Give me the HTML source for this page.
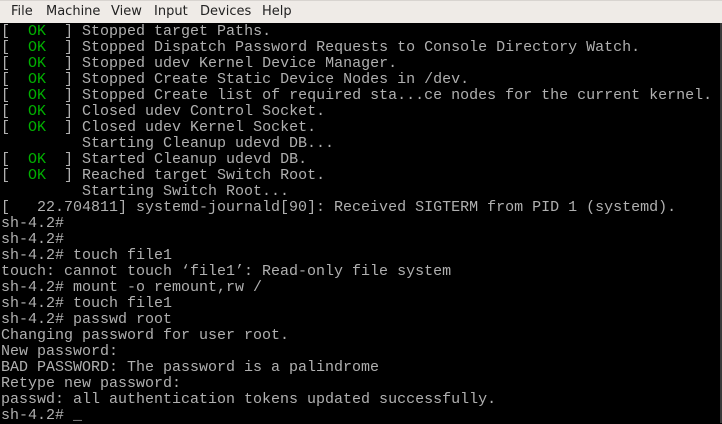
<!DOCTYPE html>
<html><head><meta charset="utf-8"><style>
html,body{margin:0;padding:0;width:722px;height:423px;overflow:hidden;background:#000}
#menu{position:absolute;left:0;top:0;width:722px;height:23px;background:#efebe7;border-top:1px solid #d8d4d0;box-sizing:border-box;font-family:"DejaVu Sans","Liberation Sans",sans-serif;font-size:13px;color:#222}
#menu span{position:absolute;top:3px}
#term{position:absolute;left:1px;top:24px;width:719px;height:399px;background:#000;font-family:"Liberation Mono",monospace;font-size:15px;line-height:16px;color:#b0b0b0;white-space:pre}
.g{color:#00b000}
#edge{position:absolute;left:720px;top:23px;width:2px;height:400px;background:#3a3a3a}
#bg{position:absolute;left:0;top:23px;width:722px;height:400px;background:#000}
</style></head><body>
<div id="bg"></div>
<div id="menu"><span style="left:11px">File</span><span style="left:46px">Machine</span><span style="left:111px">View</span><span style="left:154px">Input</span><span style="left:200px">Devices</span><span style="left:262px">Help</span></div>
<div id="term">[  <span class="g">OK</span>  ] Stopped target Paths.
[  <span class="g">OK</span>  ] Stopped Dispatch Password Requests to Console Directory Watch.
[  <span class="g">OK</span>  ] Stopped udev Kernel Device Manager.
[  <span class="g">OK</span>  ] Stopped Create Static Device Nodes in /dev.
[  <span class="g">OK</span>  ] Stopped Create list of required sta...ce nodes for the current kernel.
[  <span class="g">OK</span>  ] Closed udev Control Socket.
[  <span class="g">OK</span>  ] Closed udev Kernel Socket.
         Starting Cleanup udevd DB...
[  <span class="g">OK</span>  ] Started Cleanup udevd DB.
[  <span class="g">OK</span>  ] Reached target Switch Root.
         Starting Switch Root...
[   22.704811] systemd-journald[90]: Received SIGTERM from PID 1 (systemd).
sh-4.2#
sh-4.2#
sh-4.2# touch file1
touch: cannot touch ‘file1’: Read-only file system
sh-4.2# mount -o remount,rw /
sh-4.2# touch file1
sh-4.2# passwd root
Changing password for user root.
New password:
BAD PASSWORD: The password is a palindrome
Retype new password:
passwd: all authentication tokens updated successfully.
sh-4.2# _</div>
<div id="edge"></div>
</body></html>
